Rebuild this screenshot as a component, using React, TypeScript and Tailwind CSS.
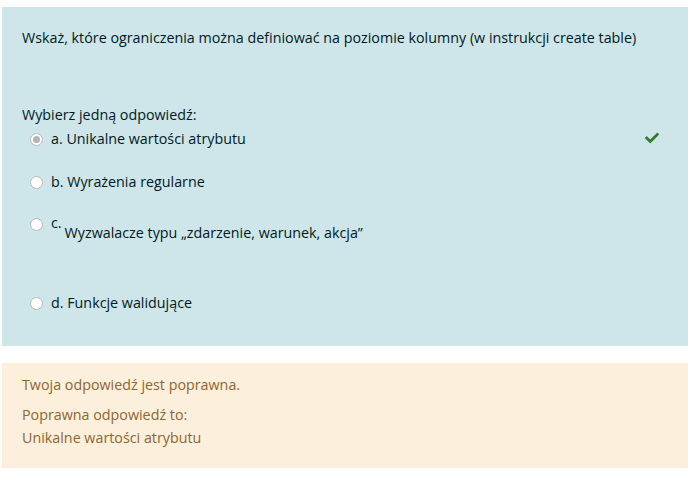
import React from "react";

function Radio({ checked }: { checked?: boolean }) {
  return (
    <span className="mt-[5px] flex h-[13px] w-[13px] shrink-0 items-center justify-center rounded-full border border-[#b9b9b9] bg-white">
      {checked ? <span className="h-[7px] w-[7px] rounded-full bg-[#b5b5b5]" /> : null}
    </span>
  );
}

export default function App() {
  return (
    <div
      className="h-[478px] w-[697px] bg-white pl-[2px] pr-[9px] pt-[7px] text-[14.3px] leading-[22px]"
      style={{ fontFamily: '"Open Sans", "Noto Sans", sans-serif' }}
    >
      <div className="bg-[#cee6ea] px-5 pb-[32px] pt-5 text-[#001a1e]">
        <p>Wskaż, które ograniczenia można definiować na poziomie kolumny (w instrukcji create table)</p>
        <p className="mt-[55px]">Wybierz jedną odpowiedź:</p>
        <div className="mt-[2px] flex flex-col pl-[8px]">
          <div className="flex items-start gap-[8px]">
            <Radio checked />
            <span className="flex-1">a. Unikalne wartości atrybutu</span>
            <svg viewBox="0 0 512 512" className="mr-[9px] mt-[3px] h-[14px] w-[14px] fill-[#357a32]">
              <path d="M173.9 439.4l-166.4-166.4c-10-10-10-26.2 0-36.2l36.2-36.2c10-10 26.2-10 36.2 0L192 312.7 432.1 72.6c10-10 26.2-10 36.2 0l36.2 36.2c10 10 10 26.2 0 36.2l-294.4 294.4c-10 10-26.2 10-36.2 0z" />
            </svg>
          </div>
          <div className="mt-[21px] flex items-start gap-[8px]">
            <Radio />
            <span>b. Wyrażenia regularne</span>
          </div>
          <div className="mt-[20px] flex items-start gap-[8px]">
            <Radio />
            <span className="-mt-[1px]">c.</span>
            <span className="-ml-[5px] mt-[9px]">Wyzwalacze typu „zdarzenie, warunek, akcja”</span>
          </div>
          <div className="mt-[48px] flex items-start gap-[8px]">
            <Radio />
            <span>d. Funkcje walidujące</span>
          </div>
        </div>
      </div>
      <div className="mt-[17px] bg-[#fcefdc] px-5 pb-[19px] pt-[11px] text-[#8e662e]">
        <p>Twoja odpowiedź jest poprawna.</p>
        <p className="mt-[8px]">Poprawna odpowiedź to:</p>
        <p className="mt-[1px]">Unikalne wartości atrybutu</p>
      </div>
    </div>
  );
}
